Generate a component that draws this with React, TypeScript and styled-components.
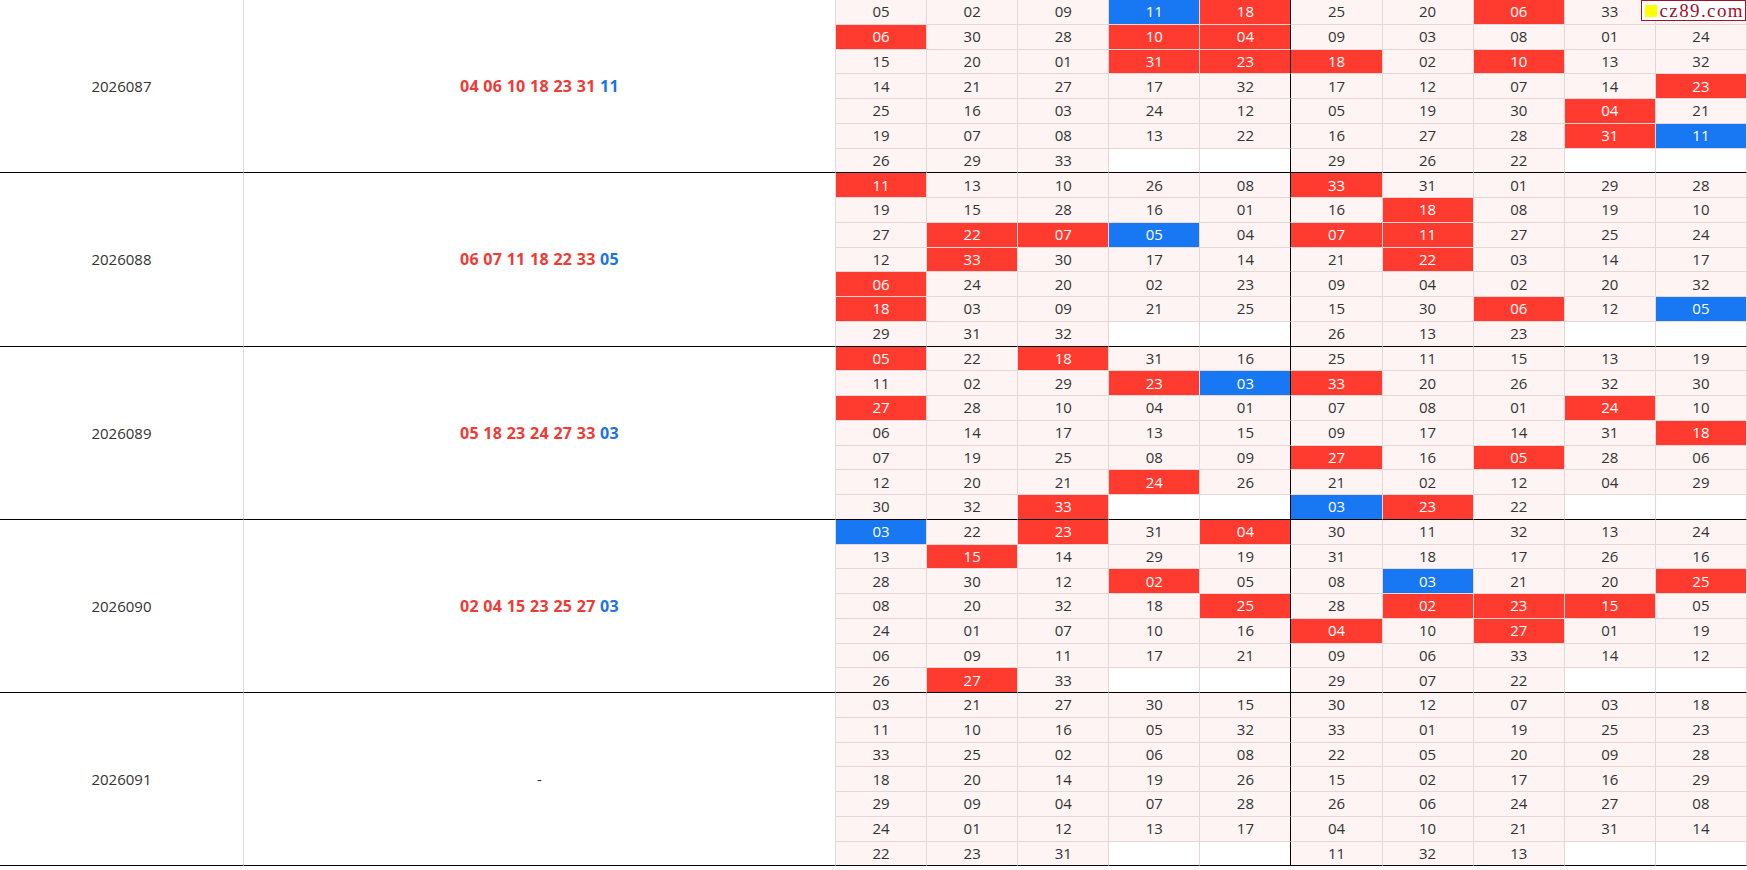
import React from 'react';
import styled, { createGlobalStyle } from 'styled-components';

interface Draw {
	period: string,
	reds: string[],
	blue: string,
	left: string[][],
	right: string[][],
}

// '*' marks a cell that sits under the site badge
const draws: Draw[] = [
	{
		period: '2026087',
		reds: ['04', '06', '10', '18', '23', '31'],
		blue: '11',
		left: [
			['05', '02', '09', '11', '18'],
			['06', '30', '28', '10', '04'],
			['15', '20', '01', '31', '23'],
			['14', '21', '27', '17', '32'],
			['25', '16', '03', '24', '12'],
			['19', '07', '08', '13', '22'],
			['26', '29', '33', '', ''],
		],
		right: [
			['25', '20', '06', '33', '*'],
			['09', '03', '08', '01', '24'],
			['18', '02', '10', '13', '32'],
			['17', '12', '07', '14', '23'],
			['05', '19', '30', '04', '21'],
			['16', '27', '28', '31', '11'],
			['29', '26', '22', '', ''],
		],
	},
	{
		period: '2026088',
		reds: ['06', '07', '11', '18', '22', '33'],
		blue: '05',
		left: [
			['11', '13', '10', '26', '08'],
			['19', '15', '28', '16', '01'],
			['27', '22', '07', '05', '04'],
			['12', '33', '30', '17', '14'],
			['06', '24', '20', '02', '23'],
			['18', '03', '09', '21', '25'],
			['29', '31', '32', '', ''],
		],
		right: [
			['33', '31', '01', '29', '28'],
			['16', '18', '08', '19', '10'],
			['07', '11', '27', '25', '24'],
			['21', '22', '03', '14', '17'],
			['09', '04', '02', '20', '32'],
			['15', '30', '06', '12', '05'],
			['26', '13', '23', '', ''],
		],
	},
	{
		period: '2026089',
		reds: ['05', '18', '23', '24', '27', '33'],
		blue: '03',
		left: [
			['05', '22', '18', '31', '16'],
			['11', '02', '29', '23', '03'],
			['27', '28', '10', '04', '01'],
			['06', '14', '17', '13', '15'],
			['07', '19', '25', '08', '09'],
			['12', '20', '21', '24', '26'],
			['30', '32', '33', '', ''],
		],
		right: [
			['25', '11', '15', '13', '19'],
			['33', '20', '26', '32', '30'],
			['07', '08', '01', '24', '10'],
			['09', '17', '14', '31', '18'],
			['27', '16', '05', '28', '06'],
			['21', '02', '12', '04', '29'],
			['03', '23', '22', '', ''],
		],
	},
	{
		period: '2026090',
		reds: ['02', '04', '15', '23', '25', '27'],
		blue: '03',
		left: [
			['03', '22', '23', '31', '04'],
			['13', '15', '14', '29', '19'],
			['28', '30', '12', '02', '05'],
			['08', '20', '32', '18', '25'],
			['24', '01', '07', '10', '16'],
			['06', '09', '11', '17', '21'],
			['26', '27', '33', '', ''],
		],
		right: [
			['30', '11', '32', '13', '24'],
			['31', '18', '17', '26', '16'],
			['08', '03', '21', '20', '25'],
			['28', '02', '23', '15', '05'],
			['04', '10', '27', '01', '19'],
			['09', '06', '33', '14', '12'],
			['29', '07', '22', '', ''],
		],
	},
	{
		period: '2026091',
		reds: [],
		blue: '',
		left: [
			['03', '21', '27', '30', '15'],
			['11', '10', '16', '05', '32'],
			['33', '25', '02', '06', '08'],
			['18', '20', '14', '19', '26'],
			['29', '09', '04', '07', '28'],
			['24', '01', '12', '13', '17'],
			['22', '23', '31', '', ''],
		],
		right: [
			['30', '12', '07', '03', '18'],
			['33', '01', '19', '25', '23'],
			['22', '05', '20', '09', '28'],
			['15', '02', '17', '16', '29'],
			['26', '06', '24', '27', '08'],
			['04', '10', '21', '31', '14'],
			['11', '32', '13', '', ''],
		],
	},
];

type Tone = 'plain' | 'red' | 'blue' | 'empty';

const GlobalStyle = createGlobalStyle`
	html, body {
		margin: 0;
		padding: 0;
		background: #fff;
	}
	body {
		font-family: "Open Sans", "Noto Sans", "Noto Sans CJK SC", sans-serif;
		color: #333;
	}
`

const Page = styled.div`
	position: relative;
	width: 1747px;
`

const Logo = styled.div`
	position: absolute;
	top: 0;
	right: 1px;
	height: 19px;
	padding: 0 1px 0 3px;
	display: flex;
	align-items: center;
	gap: 2px;
	background: #fff;
	border: 1px solid #a0102a;
	font-family: "Liberation Serif", "DejaVu Serif", serif;
	font-size: 19px;
	letter-spacing: 1.4px;
	color: #a0102a;
	line-height: 1;

	.mark {
		width: 12px;
		height: 12px;
		background: #ffff00;
	}
`

const Table = styled.table`
	width: 100%;
	table-layout: fixed;
	border-collapse: separate;
	border-spacing: 0;
	font-size: 15px;
`

const Row = styled.tr`
	height: 24.76px;
`

const PeriodCell = styled.td`
	width: 244px;
	text-align: center;
	vertical-align: middle;
	border-right: 1px solid #dcdcdc;
	border-bottom: 1px solid #000;
	box-sizing: border-box;
`

const WinCell = styled.td`
	width: 592px;
	text-align: center;
	vertical-align: middle;
	border-right: 1px solid #dcdcdc;
	border-bottom: 1px solid #000;
	font-size: 16px;
	font-weight: 700;
	letter-spacing: 0.3px;
	box-sizing: border-box;

	.red { color: #ef3a35; }
	.blue { color: #1a73e8; }
	.none { font-weight: 400; font-size: 15px; color: #333; }
`

const NumCell = styled.td<{ tone: Tone, last: boolean, split: boolean }>`
	padding: 0;
	text-align: center;
	vertical-align: middle;
	line-height: 1;
	box-sizing: border-box;
	border-right: 1px solid ${({ split }) => split ? '#000' : '#e6d6d6'};
	border-bottom: 1px solid ${({ last }) => last ? '#000' : '#e6d6d6'};
	background: ${({ tone }) =>
		tone === 'red' ? '#ff3b30' : tone === 'blue' ? '#1877f2' : tone === 'empty' ? '#fff' : '#fdf4f3'};
	color: ${({ tone }) => tone === 'red' || tone === 'blue' ? '#fff' : '#333'};
`

const toneOf = (num: string, draw: Draw): Tone => {
	if (num === '') return 'empty';
	if (draw.reds.includes(num)) return 'red';
	if (num === draw.blue) return 'blue';
	return 'plain';
}

const DrawGroup = ({ draw }: { draw: Draw }) => {
	return (
		<>
			{draw.left.map((leftRow, i) => {
				const cells = [...leftRow, ...draw.right[i]];
				const last = i === draw.left.length - 1;
				return (
					<Row key={i}>
						{i === 0 && (
							<>
								<PeriodCell rowSpan={7}>{draw.period}</PeriodCell>
								<WinCell rowSpan={7}>
									{draw.reds.length ? (
										<>
											<span className='red'>{draw.reds.join(' ')}</span>{' '}
											<span className='blue'>{draw.blue}</span>
										</>
									) : (
										<span className='none'>-</span>
									)}
								</WinCell>
							</>
						)}
						{cells.map((num, j) => (
							<NumCell key={j} tone={toneOf(num, draw)} last={last} split={j === 4}>
								{num === '*' ? null : num}
							</NumCell>
						))}
					</Row>
				)
			})}
		</>
	)
}

export default function App() {
	return (
		<Page>
			<GlobalStyle />
			<Table>
				<colgroup>
					<col style={{ width: 244 }} />
					<col style={{ width: 592 }} />
					{Array.from({ length: 10 }).map((_, i) => <col key={i} />)}
				</colgroup>
				<tbody>
					{draws.map((draw) => <DrawGroup key={draw.period} draw={draw} />)}
				</tbody>
			</Table>
			<Logo>
				<span className='mark' />
				cz89.com
			</Logo>
		</Page>
	)
}
